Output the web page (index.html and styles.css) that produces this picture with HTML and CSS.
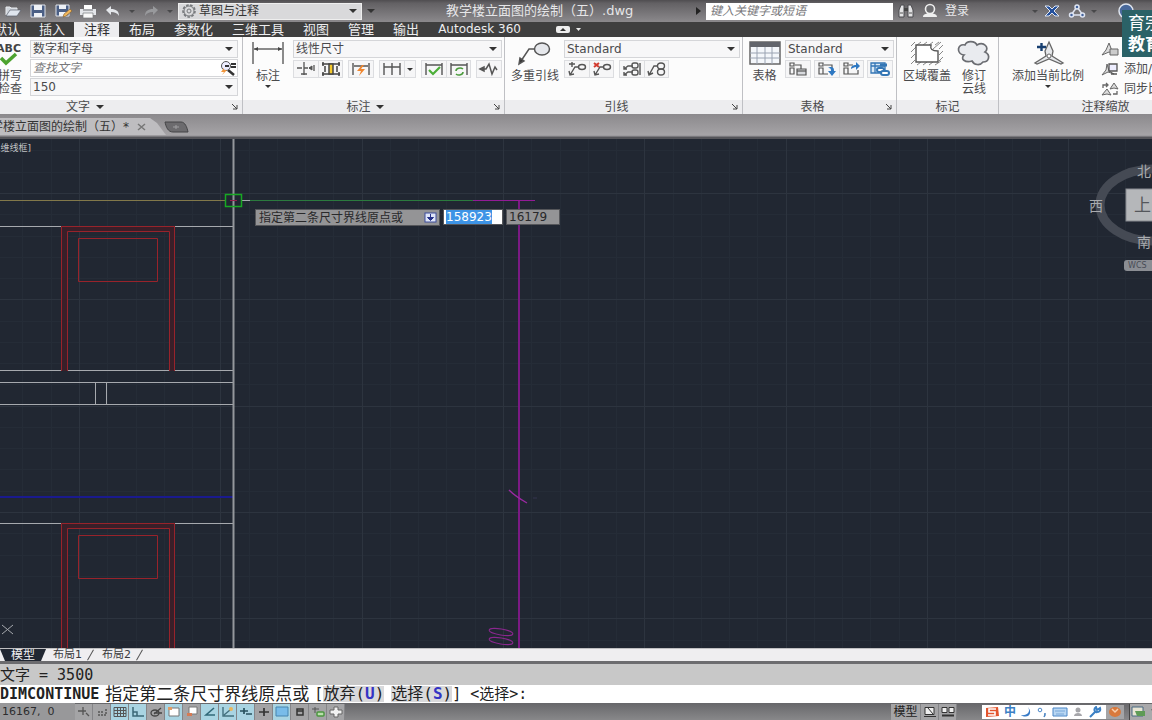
FILE: index.html
```html
<!DOCTYPE html>
<html lang="zh-CN">
<head>
<meta charset="utf-8">
<title>教学楼立面图的绘制（五）.dwg</title>
<link rel="stylesheet" href="styles.css">
</head>
<body>
<header class="titlebar">
  <div class="quick">
    <button class="tool" aria-label="打开"><svg width="18" height="16" viewBox="0 0 18 16"><path d="M2 12V4h4l1 1h6v2" fill="#cfd4dc" stroke="#e8eaee"/><path d="M2 13l4-6h11l-4 6z" fill="#dfe5ee" stroke="#5d636e" stroke-width=".7"/></svg></button>
    <button class="tool" aria-label="保存"><svg width="18" height="16" viewBox="0 0 18 16"><path d="M2 2h14v12H2z" fill="#4b5f85" stroke="#dfe3ea"/><path d="M5 2h8v5H5zM5 10h8v4H5z" fill="#eef1f6"/></svg></button>
    <button class="tool" aria-label="另存为"><svg width="18" height="16" viewBox="0 0 18 16"><path d="M2 2h13v11H2z" fill="#4b5f85" stroke="#dfe3ea"/><path d="M5 2h7v4H5zM5 9h7v4H5z" fill="#eef1f6"/><path d="M9 14l1-3 6-5 2 2-6 5z" fill="#f0b65b" stroke="#805a28" stroke-width=".6"/></svg></button>
    <button class="tool" aria-label="打印"><svg width="18" height="16" viewBox="0 0 18 16"><path d="M5 2h8v5H5z" fill="#fff"/><path d="M1 6h16v6H1z" fill="#e4e6ea"/><path d="M4 10h10v5H4z" fill="#fafafa" stroke="#77797d" stroke-width=".7"/><path d="M4 7h10" stroke="#6c6e72"/></svg></button>
    <button class="tool" aria-label="放弃"><svg width="18" height="16" viewBox="0 0 18 16"><path d="M2 7l5-4v3c5 0 8 2 8 7-2-3-4-4-8-4v3z" fill="#e3e6ea"/></svg></button>
    <i class="caret dim"></i>
    <button class="tool" aria-label="重做"><svg width="18" height="16" viewBox="0 0 18 16"><path d="M16 7l-5-4v3c-5 0-8 2-8 7 2-3 4-4 8-4v3z" fill="#98999c"/></svg></button>
    <i class="caret dim"></i>
  </div>
  <label class="field workspace">
    <svg width="18" height="16" viewBox="0 0 18 16" fill="none" stroke="#77797c"><circle cx="9" cy="8" r="6" stroke-width="1.600" stroke-dasharray="2.6 1.5"/><circle cx="9" cy="8" r="5"/><circle cx="9" cy="8" r="2"/></svg>
    <select aria-label="工作空间"><option>草图与注释</option></select><i class="caret"></i>
  </label>
  <i class="caret more"></i>
  <h1 class="doc-title">教学楼立面图的绘制（五）.dwg</h1>
  <i class="play"></i>
  <input class="search" type="text" aria-label="搜索" placeholder="键入关键字或短语">
  <div class="account">
    <button class="tool" aria-label="查找"><svg width="18" height="16" viewBox="0 0 18 16"><path d="M2 14V7l2-5h3v12zM11 14V2h3l2 5v7z" fill="#e3e3e5" stroke="#4b4b4e"/><path d="M7 5h4v3H7z" fill="#444"/><path d="M3 10h3M12 10h3" stroke="#555"/></svg></button>
    <button class="tool login"><svg width="18" height="16" viewBox="0 0 18 16"><path d="M2 14c0-3 3-3 5-4h4c2 1 5 1 5 4z" fill="#eee"/><circle cx="9" cy="6" r="4.500" fill="#6d6d70" stroke="#eee" stroke-width="1.600"/></svg>登录</button>
  </div>
  <div class="services">
    <i class="caret dim"></i>
    <button class="tool" aria-label="Exchange"><svg width="18" height="16" viewBox="0 0 18 16"><path d="M2 3h4l3 3 3-3h4l-5 5 5 5h-4l-3-3-3 3H2l5-5z" fill="#24509c" stroke="#dfe6f3"/></svg></button>
    <button class="tool" aria-label="保持连接"><svg width="18" height="16" viewBox="0 0 18 16" fill="none" stroke="#dfe5f2" stroke-width="1.500"><path d="M9 4L3 12h12z"/><circle cx="9" cy="4" r="2" fill="#43629b"/><circle cx="3.500" cy="12" r="2" fill="#43629b"/><circle cx="14.500" cy="12" r="2" fill="#43629b"/></svg></button>
    <i class="caret dim"></i>
    <button class="tool help" aria-label="帮助"><svg width="18" height="16" viewBox="0 0 18 16"><circle cx="9" cy="8" r="7" fill="#49699b" stroke="#dfe5ef" stroke-width="1.500"/></svg></button>
  </div>
</header>

<nav class="tabs">
  <button class="tab">默认</button>
  <button class="tab">插入</button>
  <button class="tab active">注释</button>
  <button class="tab">布局</button>
  <button class="tab">参数化</button>
  <button class="tab">三维工具</button>
  <button class="tab">视图</button>
  <button class="tab">管理</button>
  <button class="tab">输出</button>
  <button class="tab latin">Autodesk 360</button>
  <button class="tab minimize" aria-label="最小化"><svg width="28" height="8" viewBox="0 0 28 8"><rect width="14" height="7" rx="2" fill="#eee"/><path d="M4 5l3-3 3 3z" fill="#333"/><path d="M20 2h5l-2.500 3z" fill="#eee"/></svg></button>
</nav>

<main class="ribbon">
  <section class="panel p-text">
    <div class="body">
      <button class="big clipped"><svg width="26" height="26" viewBox="0 0 26 26"><path d="M5 18l5 5L20 14" fill="none" stroke="#4da32f" stroke-width="3.500"/><text x="0" y="12" class="abc">ABC</text></svg><span>拼写</span><span>检查</span></button>
      <div class="stack">
        <label class="field"><select aria-label="文字样式"><option>数字和字母</option></select><i class="caret"></i></label>
        <label class="field white"><input type="text" aria-label="查找文字" placeholder="查找文字"><svg width="18" height="16" viewBox="0 0 18 16"><path d="M9 10l6 5" stroke="#333" stroke-width="2.500"/><circle cx="7" cy="6" r="4.500" fill="#eef" stroke="#555"/><path d="M6 6h4M12 4h5M12 7h5" stroke="#333" stroke-width="2"/><path d="M5 8l-3 4h3l-2 3 5-5H5z" fill="#f0953b"/></svg></label>
        <label class="field"><select aria-label="文字高度"><option>150</option></select><i class="caret"></i></label>
      </div>
    </div>
    <footer><button>文字 <i class="caret"></i></button><svg class="launch" width="6" height="6" viewBox="0 0 6 6"><path d="M0 0l5 5M5 1v4H1" fill="none" stroke="#444"/></svg></footer>
  </section>

  <section class="panel p-dim">
    <div class="body">
      <button class="big"><svg width="36" height="26" viewBox="0 0 36 26" fill="none" stroke="#666" stroke-width="1.500"><path d="M3 2v22M33 2v22M4 9h28"/><path d="M4 9l4-2v4zM32 9l-4-2v4z" fill="#444" stroke="none"/></svg><span>标注</span><i class="caret small"></i></button>
      <div class="stack">
        <label class="field"><select aria-label="标注样式"><option>线性尺寸</option></select><i class="caret"></i></label>
        <div class="icons">
          <div class="group">
            <button aria-label="打断"><svg width="22" height="16" viewBox="0 0 22 16" fill="none" stroke="#555"><path d="M2 7h5M9 7h4M9 1v13M14 7h3M19 4v6M6 13h6" stroke-width="1.300"/><path d="M14 7l3-2v4z" fill="#555"/></svg></button>
            <button aria-label="调整间距"><svg width="22" height="16" viewBox="0 0 22 16" fill="none" stroke="#444" stroke-width="1.500"><path d="M2 3h18M2 13h18M3 1v4M19 1v4M3 11v4M19 11v4M5 5v6M17 5v6"/><path d="M9 3h4v10H9z" fill="#f5c92c"/></svg></button>
          </div>
          <div class="group"><button aria-label="快速标注"><svg width="22" height="16" viewBox="0 0 22 16" fill="none" stroke="#555" stroke-width="1.400"><path d="M3 2v12M19 2v12M4 5h14"/><path d="M12 4l-5 6h4l-2 5 6-7h-4l3-4z" fill="#f0862e" stroke="none"/></svg></button></div>
          <div class="group"><button aria-label="连续"><svg width="22" height="16" viewBox="0 0 22 16" fill="none" stroke="#555" stroke-width="1.400"><path d="M3 2v12M11 2v12M19 2v12M3 6h16"/></svg></button><button class="slim" aria-label="更多"><i class="caret small"></i></button></div>
          <div class="group">
            <button aria-label="检验"><svg width="22" height="16" viewBox="0 0 22 16" fill="none" stroke="#555" stroke-width="1.400"><path d="M3 2v12M19 2v12M3 4h16"/><path d="M6 9l4 4 7-7" stroke="#4caf38" stroke-width="2.200"/></svg></button>
            <button aria-label="更新"><svg width="22" height="16" viewBox="0 0 22 16" fill="none" stroke="#555" stroke-width="1.400"><path d="M3 2v12M19 2v12M3 4h16"/><path d="M8 10a4 3 0 0 1 7-2M15 11a4 3 0 0 1-7 2" stroke="#4a9b3c" stroke-width="1.600"/></svg></button>
          </div>
          <div class="group"><button aria-label="折弯"><svg width="22" height="16" viewBox="0 0 22 16" fill="none" stroke="#555" stroke-width="1.500"><path d="M3 8h5l3-5 3 10 3-7 2 3"/><path d="M2 8l4-2v4z" fill="#555"/></svg></button></div>
        </div>
      </div>
    </div>
    <footer><button>标注 <i class="caret"></i></button><svg class="launch" width="6" height="6" viewBox="0 0 6 6"><path d="M0 0l5 5M5 1v4H1" fill="none" stroke="#444"/></svg></footer>
  </section>

  <section class="panel p-leader">
    <div class="body">
      <button class="big"><svg width="36" height="26" viewBox="0 0 36 26" fill="none" stroke="#555" stroke-width="1.500"><ellipse cx="25" cy="9" rx="7.500" ry="6" fill="#e6e8ec"/><path d="M17 9h-5L4 21"/><path d="M2 24l1-6 4 3z" fill="#333"/></svg><span>多重引线</span></button>
      <div class="stack">
        <label class="field"><select aria-label="引线样式"><option>Standard</option></select><i class="caret"></i></label>
        <div class="icons">
          <div class="group">
            <button aria-label="添加引线"><svg width="22" height="16" viewBox="0 0 22 16" fill="none" stroke="#555" stroke-width="1.400"><ellipse cx="16" cy="6" rx="3.500" ry="2.500"/><path d="M12 6H9l-5 8M3 3h6M6 1v5M3 10l1 4 4-1"/></svg></button>
            <button aria-label="删除引线"><svg width="22" height="16" viewBox="0 0 22 16" fill="none" stroke="#555" stroke-width="1.400"><ellipse cx="16" cy="6" rx="3.500" ry="2.500"/><path d="M12 6H9l-5 8M3 10l1 4 4-1"/><path d="M3 2l5 4M8 2L3 6" stroke="#d33b2f" stroke-width="2"/></svg></button>
          </div>
          <div class="group">
            <button aria-label="对齐"><svg width="22" height="16" viewBox="0 0 22 16" fill="none" stroke="#555" stroke-width="1.400"><path d="M19 2v12M12 5H7L3 8M12 11H7l-4 3M3 5v3h3M3 11v3h3"/><rect x="11" y="2" width="6" height="5" rx="2"/><rect x="11" y="9" width="6" height="5" rx="2"/></svg></button>
            <button aria-label="合并"><svg width="22" height="16" viewBox="0 0 22 16" fill="none" stroke="#555" stroke-width="1.400"><ellipse cx="15" cy="5" rx="3.500" ry="3"/><ellipse cx="15" cy="11" rx="3.500" ry="3"/><path d="M11 5H8l-5 9M2 10l1 4 4-2"/></svg></button>
          </div>
        </div>
      </div>
    </div>
    <footer><button>引线</button><svg class="launch" width="6" height="6" viewBox="0 0 6 6"><path d="M0 0l5 5M5 1v4H1" fill="none" stroke="#444"/></svg></footer>
  </section>

  <section class="panel p-table">
    <div class="body">
      <button class="big"><svg width="32" height="26" viewBox="0 0 32 26"><path d="M1 2h30v22H1z" fill="#f4f7fb" stroke="#666" stroke-width="1.500"/><path d="M1 2h30v5H1z" fill="#62656c"/><path d="M1 13h30M1 18h30M8 7v17M16 7v17M23 7v17" stroke="#9aa3b2"/></svg><span>表格</span></button>
      <div class="stack">
        <label class="field"><select aria-label="表格样式"><option>Standard</option></select><i class="caret"></i></label>
        <div class="icons">
          <div class="group"><button aria-label="提取数据"><svg width="22" height="16" viewBox="0 0 22 16" fill="none" stroke="#555" stroke-width="1.200"><path d="M3 2h4v3H3zM3 7h4v6H3zM8 4h6v4"/><path d="M10 8h9v6h-9z" fill="#d7d9dd"/><path d="M10 10h9"/></svg></button></div>
          <div class="group">
            <button aria-label="从源下载"><svg width="22" height="16" viewBox="0 0 22 16" fill="none" stroke="#555" stroke-width="1.200"><path d="M3 2h4v3H3zM3 7h4v6H3zM8 4h8v4M7 13h5"/><path d="M14 6c4 0 4 2 4 4h2l-4 5-4-5h3c0-2 0-3-3-3z" fill="#2e78c2" stroke="none"/></svg></button>
            <button aria-label="上载到源"><svg width="22" height="16" viewBox="0 0 22 16" fill="none" stroke="#555" stroke-width="1.200"><path d="M3 2h4v3H3zM3 7h4v6H3zM8 4h4M7 13h10V9"/><path d="M10 8c0-3 2-4 5-4V1l4 4-4 4V6c-2 0-3 1-5 2z" fill="#2e78c2" stroke="none"/></svg></button>
          </div>
          <div class="group"><button aria-label="链接数据"><svg width="22" height="16" viewBox="0 0 22 16" fill="none" stroke="#3476b5" stroke-width="1.300"><path d="M2 2h14v10H2z" fill="#d9e8f5"/><path d="M2 5h14M6 2v10"/><rect x="8" y="7" width="7" height="4" rx="2" fill="#fff" stroke-width="2"/><rect x="12" y="10" width="8" height="4" rx="2" fill="#fff" stroke-width="2"/><path d="M11 4h7" stroke-width="3"/></svg></button></div>
        </div>
      </div>
    </div>
    <footer><button>表格</button><svg class="launch" width="6" height="6" viewBox="0 0 6 6"><path d="M0 0l5 5M5 1v4H1" fill="none" stroke="#444"/></svg></footer>
  </section>

  <section class="panel p-mark">
    <div class="body">
      <button class="big"><svg width="36" height="26" viewBox="0 0 36 26"><path d="M2 6l4-4M2 12l5-5M2 18l4-4M2 24l4-4M8 5l4-3M14 5l4-3M20 5l4-3M26 5l4-3M30 9l4-4M30 15l4-4M30 21l4-4M8 25l4-3M14 25l4-3M20 25l4-3M26 25l6-4M24 9l8-7" stroke="#888"/><path d="M7 5h15c-1 4 1 6 7 6v11H7z" fill="#fff" stroke="#555" stroke-width="1.400"/></svg><span>区域覆盖</span></button>
      <button class="big"><svg width="36" height="26" viewBox="0 0 36 26"><path d="M8 15C0 14 1 3 9 5c2-5 10-4 12 0 7-4 13 3 8 7 6 3 4 10-2 10-3 4-9 3-11-1-7 2-12-2-8-6z" fill="#e9ebef" stroke="#6b6d72" stroke-width="1.700"/></svg><span>修订</span><span>云线</span></button>
    </div>
    <footer><button>标记</button></footer>
  </section>

  <section class="panel p-scale">
    <div class="body">
      <button class="big"><svg width="36" height="26" viewBox="0 0 36 26"><path d="M19 2l4 9-1 5 11 7-2 1-12-5-12 5-2-1 11-7-1-5z" fill="#e6e8eb" stroke="#666" stroke-width="1.300"/><circle cx="19" cy="16" r="2" fill="#fff" stroke="#666"/><path d="M7 7h9M11.500 3v8" stroke="#173f70" stroke-width="2.400"/></svg><span>添加当前比例</span><i class="caret small"></i></button>
      <div class="stack links">
        <button aria-label="比例列表"><svg width="18" height="16" viewBox="0 0 18 16"><path d="M8 2l3 8 4 3-7-2-7 3 4-5z" fill="#ddd" stroke="#666"/><path d="M9 8h8v6H9z" fill="#ccc" stroke="#666"/></svg></button>
        <button><svg width="18" height="16" viewBox="0 0 18 16"><path d="M6 3l2 7 5 3-6-2-6 3 4-5z" fill="#ddd" stroke="#666"/><path d="M8 3h8v7H8zM10 13h6" fill="#eef" stroke="#555" stroke-width="1.300"/></svg>添加/删除比例</button>
        <button><svg width="18" height="16" viewBox="0 0 18 16"><path d="M2 7V4h4M5 2l2 2-2 2" fill="none" stroke="#666" stroke-width="1.300"/><path d="M13 2l4 6-4-1-4 1zM6 8l4 6-4-1-5 1z" fill="#ddd" stroke="#666"/><path d="M12 13h4v-3" fill="none" stroke="#666" stroke-width="1.300"/></svg>同步比例位置</button>
      </div>
    </div>
    <footer><button>注释缩放</button></footer>
  </section>
</main>

<div class="files">
  <button class="file">教学楼立面图的绘制（五）*<svg width="9" height="8" viewBox="0 0 9 8"><path d="M1 1l7 6M8 1L1 7" stroke="#777" stroke-width="1.500"/></svg></button>
  <button class="new" aria-label="新图形"><svg width="26" height="12" viewBox="0 0 26 12"><path d="M1 1h16c4 0 6 5 7 10H9C4 11 2 6 1 1z" fill="#6c6b6e" stroke="#454547"/><path d="M9 6h6M12 4v4" stroke="#a0a0a2"/></svg></button>
</div>

<div class="canvas">
  <svg class="drawing" width="100%" height="100%">
    <defs>
      <pattern id="grid" x="79" y="54" width="424" height="319" patternUnits="userSpaceOnUse">
        <path d="M28.500 0v319M57.500 0v319M85.500 0v319M113.500 0v319M170.500 0v319M198.500 0v319M226.500 0v319M254.500 0v319M311.500 0v319M339.500 0v319M367.500 0v319M396.500 0v319M0 21.500h424M0 43.500h424M0 64.500h424M0 85.500h424M0 128.500h424M0 149.500h424M0 170.500h424M0 191.500h424M0 234.500h424M0 255.500h424M0 276.500h424M0 298.500h424" stroke="#252c37"/>
        <path d="M.5 0v319M141.500 0v319M283.500 0v319M0 .5h424M0 106.500h424M0 213.500h424" stroke="#2d343f"/>
      </pattern>
      <g id="door" fill="none">
        <path d="M64 145V3h108v142" stroke="#3a1f29" stroke-width="6"/>
        <path d="M61.500 145V.5h113V145M67.500 145V5.500h102V145M78.500 12.500h79v43h-79z" stroke="#98232b"/>
      </g>
    </defs>
    <rect width="100%" height="100%" fill="url(#grid)"/>
    <g fill="none" stroke="#a6a9ae">
      <path d="M0 87.500h233M0 231.500h233M0 243.500h233M0 265.500h233M95.500 244v21M106.500 244v21M0 384.500h233"/>
      <path d="M0 358h233" stroke="#1a1a8e" stroke-width="2"/>
      <path d="M0 61.500h225" stroke="#82784a"/>
      <path d="M249 61.500h224" stroke="#2b7a3e"/>
      <path d="M473 61.500h62" stroke="#921b96"/>
      <path d="M519 62v600" stroke="#7b1a84" stroke-width="2"/>
      <path d="M509 351c5 5 11 9 18 13" stroke="#9a2aa2" stroke-width="1.400"/>
      <path d="M533 359h4" stroke="#34354f"/>
      <ellipse cx="501" cy="493" rx="12" ry="3" transform="rotate(9 501 493)" stroke="#8b278f"/>
      <ellipse cx="501" cy="502" rx="12" ry="3" transform="rotate(9 501 502)" stroke="#8b278f"/>
      <path d="M233.500 0v700" stroke="#94979c" stroke-width="2"/>
      <path d="M241 61.500h9"/>
      <path d="M2 486l11 9M13 486l-11 9"/>
    </g>
    <use href="#door" y="87"/>
    <use href="#door" y="384"/>
    <rect x="225.500" y="55.500" width="16" height="12" fill="none" stroke="#17a923" stroke-width="1.500"/>
    <path d="M230 61.500h7" stroke="#96204e"/>
  </svg>
  <span class="view-label">[-][俯视][二维线框]</span>
  <form class="prompt">
    <label class="hint" for="px">指定第二条尺寸界线原点或<svg width="13" height="11" viewBox="0 0 13 11"><rect x="1" y="1" width="11" height="9" fill="#dfe5f8" stroke="#3d4c9a"/><path d="M6.500 2v4M3.500 5.500h6l-3 3z" fill="#26328a" stroke="#26328a"/></svg></label>
    <output class="coord current" id="px"><mark>158923</mark></output>
    <output class="coord">16179</output>
  </form>
  <div class="cube">
    <svg width="120" height="130" viewBox="0 0 120 130"><ellipse cx="60" cy="66" rx="54" ry="36" fill="none" stroke="#454a54" stroke-width="9"/><rect x="32" y="50" width="58" height="32" fill="#b5b7ba" stroke="#898c91"/></svg>
    <span class="dir north">北</span><span class="dir west">西</span><span class="dir south">南</span><span class="dir top">上</span>
    <button class="wcs">WCS</button>
  </div>
</div>

<div class="layouts">
  <button class="layout on">模型</button>
  <button class="layout">布局1</button>
  <button class="layout">布局2</button>
</div>

<div class="history">文字 = 3500</div>
<div class="command"><b>DIMCONTINUE</b><span>指定第二条尺寸界线原点或</span>[<button>放弃(<b>U</b>)</button><button>选择(<b>S</b>)</button>] &lt;选择&gt;:</div>

<footer class="status">
  <span class="position">16167,&nbsp; 0</span>
  <div class="toggles">
    <button aria-label="推断约束"><svg width="14" height="12" viewBox="0 0 14 12" fill="none" stroke="#555" stroke-width="1.300"><path d="M1 5h8M6 1v8M9 7l3 3"/></svg></button>
    <button aria-label="捕捉"><svg width="14" height="12" viewBox="0 0 14 12" fill="none" stroke="#555"><path d="M3 9h8V2M3 6h5" stroke-dasharray="2 1" stroke-width="1.500"/></svg></button>
    <button class="on" aria-label="栅格"><svg width="14" height="12" viewBox="0 0 14 12" fill="none" stroke="#555"><path d="M1 1.500h12v9H1zM1 4.500h12M1 7.500h12M4.500 1v10M7.500 1v10M10.500 1v10"/></svg></button>
    <button class="on" aria-label="正交"><svg width="14" height="12" viewBox="0 0 14 12" fill="none" stroke="#3b6877" stroke-width="1.500"><path d="M2 1v9h11M2 6h4v4"/></svg></button>
    <button aria-label="极轴"><svg width="14" height="12" viewBox="0 0 14 12" fill="none" stroke="#444" stroke-width="1.300"><ellipse cx="6" cy="7" rx="4" ry="3"/><path d="M5 8l7-6M5 7h8"/></svg></button>
    <button class="on" aria-label="对象捕捉"><svg width="14" height="12" viewBox="0 0 14 12"><path d="M2 2h10v8H2z" fill="#fff" stroke="#777"/><path d="M1 1h4v3H1z" fill="#de9c66"/></svg></button>
    <button aria-label="三维对象捕捉"><svg width="14" height="12" viewBox="0 0 14 12"><path d="M4 1h8v7H4z" fill="#fff" stroke="#777"/><path d="M2 7h5v3H2z" fill="#d67b54"/></svg></button>
    <button class="on" aria-label="对象追踪"><svg width="14" height="12" viewBox="0 0 14 12" fill="none" stroke="#326979" stroke-width="1.600"><path d="M11 2L3 9h9"/></svg></button>
    <button class="on" aria-label="动态UCS"><svg width="14" height="12" viewBox="0 0 14 12" fill="none" stroke="#43707e" stroke-width="1.400"><path d="M2 1v9h11M3 9l6-5"/><circle cx="10" cy="3" r="2" fill="#e9b55b" stroke="none"/></svg></button>
    <button class="on" aria-label="动态输入"><svg width="14" height="12" viewBox="0 0 14 12" fill="none" stroke="#29525f" stroke-width="1.700"><path d="M1 5h8M5 2v6M7 8h6"/></svg></button>
    <button aria-label="线宽"><svg width="14" height="12" viewBox="0 0 14 12" fill="none" stroke="#333" stroke-width="1.700"><path d="M2 6h10M7 2v8"/></svg></button>
    <button class="on" aria-label="透明度"><svg width="14" height="12" viewBox="0 0 14 12"><path d="M1 1h12v9H1z" fill="#79bce9" stroke="#4785af"/></svg></button>
    <button aria-label="快捷特性"><svg width="14" height="12" viewBox="0 0 14 12" fill="none" stroke="#333" stroke-width="1.500"><path d="M4 3h6v6H4zM4 5h6"/></svg></button>
    <button aria-label="选择循环"><svg width="14" height="12" viewBox="0 0 14 12" fill="none" stroke="#555"><path d="M1 3h7M4 1v6"/><rect x="6" y="6" width="7" height="4" rx="1" fill="#b9dfac" stroke="#4c9740" stroke-width="1.500"/></svg></button>
    <button aria-label="注释监视器"><svg width="14" height="12" viewBox="0 0 14 12"><path d="M5 1h4v3h4v4H9v3H5V8H1V4h4z" fill="#f2f2f2" stroke="#666"/></svg></button>
  </div>
  <div class="space">
    <button class="model">模型</button>
    <button aria-label="快速查看布局"><svg width="14" height="12" viewBox="0 0 14 12" fill="none" stroke="#333"><path d="M2 1.500h9v7H2z" fill="#eee"/><path d="M5 2l5 6M1 10.500h12"/></svg></button>
    <button aria-label="快速查看图形"><svg width="14" height="12" viewBox="0 0 14 12" fill="none" stroke="#333"><path d="M1 1.500h5v5H1zM8 1.500h5v5H8z" fill="#eee"/><path d="M1 9.500h12" stroke-width="2"/></svg></button>
  </div>
  <div class="ime">
    <svg width="16" height="12" viewBox="0 0 16 12"><path d="M2 2l12-1 1 9-13 1z" fill="#e3552e"/><path d="M12 3H5v3h6v3H4" fill="none" stroke="#fff" stroke-width="1.600"/></svg>
    <span>中</span>
    <svg width="12" height="12" viewBox="0 0 12 12"><path d="M8 1c3 5-1 9-7 8 5 4 13 0 7-8z" fill="#387bc7"/></svg>
    <svg width="12" height="12" viewBox="0 0 12 12"><circle cx="4" cy="4" r="1.800" fill="none" stroke="#4b87c8"/><path d="M9 7v2l-1 2" stroke="#4b87c8" stroke-width="1.500"/></svg>
    <svg width="16" height="12" viewBox="0 0 16 12"><path d="M1 2h14v8H1z" fill="#b9d7f3" stroke="#4b87c8"/><path d="M3 5h10M4 8h8" stroke="#78a8d9"/></svg>
    <svg width="12" height="12" viewBox="0 0 12 12" fill="#a6a6aa"><circle cx="6" cy="4" r="2.500"/><path d="M2 10c0-4 8-4 8 0z"/></svg>
    <svg width="14" height="12" viewBox="0 0 14 12"><path d="M2 11l6-6M12 2L9 4 8 1C5 3 7 7 9 6c2 0 4-1 3-4z" fill="none" stroke="#3b80c4" stroke-width="2"/></svg>
  </div>
  <svg class="ball" width="18" height="14" viewBox="0 0 18 14"><ellipse cx="9" cy="7" rx="6" ry="5" fill="#d9793c"/><path d="M6 4l3 3 3-3" stroke="#f8cfad" fill="none" stroke-width="1.500"/></svg>
  <button class="tray" aria-label="注释可见性"><svg width="28" height="12" viewBox="0 0 28 12"><path d="M2 1h11v9H2z" fill="#e8e5d4" stroke="#496b83"/><path d="M5 5h10v5H7z" fill="#5e9b56"/><path d="M22 3l4 6" stroke="#555" stroke-width="2"/></svg></button>
</footer>

<aside class="badge"><span>育宗</span><strong>教育</strong></aside>
</body>
</html>
```

FILE: styles.css
```css
* { box-sizing: border-box; }
body {
  margin: 0;
  height: 100vh;
  display: flex;
  flex-direction: column;
  overflow: hidden;
  position: relative;
  font: 12px/14px "DejaVu Sans", "Noto Sans CJK SC", sans-serif;
  color: #4a4a4c;
  background: #212732;
}
button, input, select { font: inherit; color: inherit; border: 0; padding: 0; margin: 0; background: none; }
button { white-space: nowrap; }
svg { display: block; flex: none; }
select { appearance: none; flex: 1; min-width: 0; outline: 0; }
.caret { flex: none; width: 0; height: 0; border: 4px solid transparent; border-top-color: #333; border-bottom: 0; display: inline-block; }
.caret.small { border-width: 3px; border-bottom: 0; }
.caret.dim { border-width: 3px; border-bottom: 0; border-top-color: #48484a; margin: 0 5px; }

/* title bar */
.titlebar {
  flex: none;
  height: 22px;
  display: flex;
  align-items: center;
  padding-left: 4px;
  background: linear-gradient(#4f4d50, #636164 15%, #8b898c);
}
.quick { display: flex; align-items: center; width: 174px; padding-right: 5px; justify-content: space-between; }
.quick .caret.dim { margin: 0; }
.tool { display: flex; align-items: center; color: #e8e8ea; }
.field { display: flex; align-items: center; height: 18px; padding: 0 4px 0 2px; border: 1px solid #d5d6d9; background: #f7f7f8; }
.field.white { background: #fff; padding-right: 0; }
.workspace { width: 184px; height: 17px; padding-left: 1px; background: #d9d9db; border-color: #eee; color: #333; gap: 1px; }
.more { margin-left: 5px; }
.doc-title { margin: 0; padding-left: 71px; flex: 1; font-size: 13px; font-weight: 400; color: #e6e6e8; white-space: nowrap; }
.play { border: 4px solid transparent; border-left: 5px solid #222; border-right: 0; margin-right: 5px; }
.search { width: 187px; height: 17px; background: #fff; padding: 0 4px; font-style: italic; }
.search::placeholder, .field input::placeholder { color: #77777a; opacity: 1; }
.account { display: flex; gap: 6px; padding-left: 4px; }
.login { gap: 6px; }
.services { display: flex; align-items: center; width: 125px; margin-left: 58px; }
.services .tool + .tool { margin-left: 7px; }
.services .help { margin-left: 15px; }

/* ribbon tabs */
.tabs { flex: none; display: flex; height: 15px; background: #3f3f3f; overflow: hidden; }
.tab { flex: none; height: 15px; padding: 0 9px 0 10px; font-size: 13px; line-height: 15px; color: #ededee; }
.tab:first-child { width: 29px; padding-left: 0; display: flex; justify-content: flex-end; }
.tab.active { background: #ededef; color: #2e2e30; }
.tab.latin { font-size: 12px; }
.tab.minimize { padding-left: 26px; }

/* ribbon panels */
.ribbon { flex: none; display: flex; height: 77px; overflow: hidden; background: #fcfcfc; }
.panel { flex: none; display: flex; flex-direction: column; border-right: 1px solid #bfc0c4; }
.p-text { width: 243px; }
.p-dim { width: 262px; }
.p-leader { width: 238px; }
.p-table { width: 154px; }
.p-mark { width: 102px; }
.p-scale { width: 214px; }
.body { flex: 1; display: flex; padding: 3px 2px 0; }
.panel footer { display: flex; align-items: center; height: 14px; padding: 0 4px; background: #ededef; }
.panel footer button { flex: 1; line-height: 14px; }
.panel footer .caret { margin-left: 2px; vertical-align: 2px; }
.panel.p-text footer button { padding-right: 66px; }
.panel.p-dim footer button { padding-right: 10px; }
.panel.p-leader footer button { padding-right: 8px; }
.panel.p-table footer button { padding-right: 8px; }
.big { flex: none; display: flex; flex-direction: column; align-items: center; line-height: 13px; }
.big svg { margin-bottom: 4px; }
.big .caret { margin-top: 2px; }
.abc { font: bold 11px "DejaVu Sans", sans-serif; fill: #444; }
.stack { flex: 1; min-width: 0; display: flex; flex-direction: column; gap: 1px; }
.stack input { flex: 1; min-width: 0; font-style: italic; }
.icons { display: flex; gap: 5px; padding-top: 1px; }
.group { display: flex; border: 1px solid #dcdde0; background: #f6f6f7; }
.group button { width: 24px; height: 16px; display: flex; align-items: center; justify-content: center; }
.group button + button { border-left: 1px solid #dcdde0; }
.group .slim { width: 11px; }
.clipped { width: 22px; align-items: flex-end; }
.p-text .body { padding-left: 0; padding-right: 4px; gap: 8px; }
.p-dim .body { padding-left: 7px; gap: 7px; }
.p-leader .body { gap: 3px; padding-left: 4px; }
.p-leader .big { width: 52px; }
.p-table .body { padding-left: 5px; gap: 4px; }
.p-table .big { width: 33px; }
.p-table .icons { gap: 3px; }
.p-mark .body { gap: 5px; padding-left: 6px; }
.p-scale .body { padding-left: 13px; gap: 17px; }
.links { gap: 3px; }
.links button { display: flex; align-items: center; gap: 5px; height: 17px; }

/* drawing file tabs */
.files { flex: none; display: flex; align-items: center; height: 25px; background: linear-gradient(#8b898c, #a6a4a7 85%, #55555a 94%); }
.file {
  width: 166px;
  height: 17px;
  display: flex;
  align-items: center;
  justify-content: flex-end;
  gap: 8px;
  padding-right: 20px;
  color: #333;
  background: #bebdc0;
  clip-path: polygon(0 0, 150px 0, 157px 5px, 100% 100%, 0 100%);
}
.new { margin-left: -2px; }

/* model space */
.canvas { flex: 1; min-height: 0; position: relative; overflow: hidden; background: #212732; }
.drawing { position: absolute; inset: 0; }
.view-label { position: absolute; top: 3px; left: 0; width: 31px; display: flex; justify-content: flex-end; white-space: nowrap; font-size: 9px; line-height: 12px; color: #c0c2c5; }
.prompt { position: absolute; top: 70px; left: 255px; display: flex; gap: 3px; color: #29292b; }
.hint { display: flex; align-items: center; justify-content: space-between; width: 185px; height: 17px; padding: 0 2px 0 3px; background: #949496; border: 1px solid #55565a; }
.coord { width: 60px; height: 16px; padding-left: 2px; line-height: 14px; background: #fff; border: 1px solid #55565a; }
.coord:last-child { width: 54px; background: #949496; }
.coord mark { background: #3e94e6; color: #fff; }
.cube { position: absolute; top: 0; right: -62px; width: 120px; height: 140px; }
.cube svg { width: 120px; height: 130px; }
.dir { position: absolute; font-size: 14px; line-height: 16px; color: #a9abaf; }
.north { top: 24px; left: 43px; }
.west { top: 59px; left: -5px; }
.south { top: 95px; left: 43px; }
.top { top: 58px; left: 40px; color: #55575c; font-size: 17px; }
.wcs { position: absolute; top: 121px; left: 30px; width: 54px; height: 11px; padding-left: 4px; border-radius: 3px; background: #8b8e94; color: #484c55; font-size: 8px; line-height: 11px; text-align: left; }

/* layout tabs */
.layouts { flex: none; display: flex; height: 16px; background: #efeef0; border-bottom: 3px solid #6c6c6f; border-top: 1px solid #c0c0c2; }
.layout { position: relative; height: 12px; padding: 0 13px 0 7px; font-size: 11px; line-height: 12px; color: #3a3a3c; }
.layout::after { content: ""; position: absolute; top: 0; right: 4px; width: 1px; height: 12px; background: #555; transform: rotate(30deg); }
.layout.on { font-size: 12px; padding: 0 11px; color: #f2f2f2; background: #212732; clip-path: polygon(0 0, 100% 0, 41px 100%, 5px 100%); }
.layout.on::after { display: none; }

/* command line */
.history, .command { flex: none; overflow: hidden; white-space: nowrap; font: 15px/18px "DejaVu Sans Mono", "Noto Sans CJK SC", monospace; color: #222; }
.history { height: 21px; line-height: 22px; background: #c8c8c8; }
.command { height: 18px; display: flex; align-items: center; background: #fff; white-space: pre; }
.command span { font-size: 17px; margin: 0 5px 0 6px; }
.command button { height: 16px; line-height: 16px; font-size: 16px; background: #d9d9db; margin-right: 7px; }
.command button:last-of-type { margin-right: 0; }
.command button b { color: #3434c4; }

/* status bar */
.status { flex: none; display: flex; align-items: center; height: 17px; background: linear-gradient(#67676a, #88888a); }
.position { width: 75px; padding-left: 2px; font-size: 11px; color: #2c2c2e; background: #98989a; line-height: 17px; }
.toggles { display: flex; flex: 1; }
.toggles button, .space button { width: 18px; height: 16px; display: flex; align-items: center; justify-content: center; background: #a4a4a6; border-right: 1px solid #858588; }
.toggles .on { background: #a9d4e2; }
.space { display: flex; width: 91px; }
.space .model { width: 30px; color: #222; }
.ime { display: flex; align-items: center; justify-content: space-between; width: 124px; height: 14px; padding: 0 4px 0 2px; background: #fff; }
.ime span { color: #3b80c4; font-weight: 700; }
.ball { background: #a4a4a6; }
.tray { margin-left: 5px; width: 23px; height: 16px; overflow: hidden; background: #a9a9ab; border-left: 1px solid #444; }

/* corner badge */
.badge { position: absolute; top: 10px; right: 0; width: 30px; height: 47px; padding: 3px 0 0 6px; overflow: hidden; display: flex; flex-direction: column; white-space: nowrap; font-size: 17px; line-height: 21px; color: #fff; background: #2b6267; }
```
